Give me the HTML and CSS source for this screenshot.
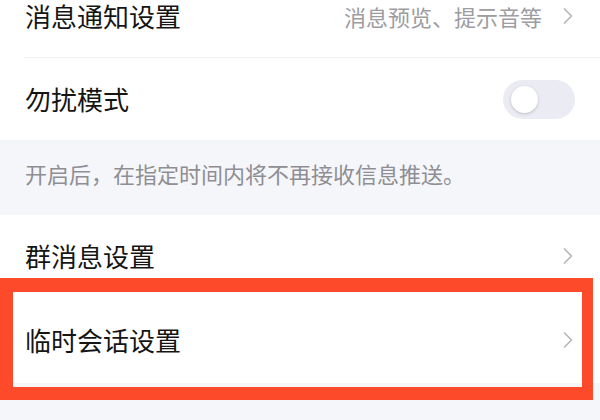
FILE: index.html
```html
<!DOCTYPE html>
<html lang="zh-CN">
<head>
<meta charset="utf-8">
<link rel="stylesheet" href="styles.css">
</head>
<body>
<div class="page">
  <div class="group">
    <div class="row first with-line">
      <span class="label">消息通知设置</span>
      <span class="right">
        <span class="value">消息预览、提示音等</span>
        <svg class="chev" viewBox="0 0 12 18" width="12" height="18"><path d="M2.5 2 L9.5 9 L2.5 16" fill="none" stroke="#b8b8bc" stroke-width="1.7" stroke-linecap="round" stroke-linejoin="round"/></svg>
      </span>
    </div>
    <div class="row dnd">
      <span class="label">勿扰模式</span>
      <span class="toggle"><span class="knob"></span></span>
    </div>
  </div>
  <div class="note">开启后，在指定时间内将不再接收信息推送。</div>
  <div class="group">
    <div class="row group-row">
      <span class="label">群消息设置</span>
      <svg class="chev" viewBox="0 0 12 18" width="12" height="18"><path d="M2.5 2 L9.5 9 L2.5 16" fill="none" stroke="#b8b8bc" stroke-width="1.7" stroke-linecap="round" stroke-linejoin="round"/></svg>
    </div>
    <div class="row temp-row">
      <span class="label">临时会话设置</span>
      <svg class="chev" viewBox="0 0 12 18" width="12" height="18"><path d="M2.5 2 L9.5 9 L2.5 16" fill="none" stroke="#b8b8bc" stroke-width="1.7" stroke-linecap="round" stroke-linejoin="round"/></svg>
      <span class="highlight"></span>
    </div>
  </div>
  <div class="rest"></div>
</div>
</body>
</html>
```

FILE: styles.css
```css
html, body {
  margin: 0;
  padding: 0;
  background: #f5f6fa;
  overflow: hidden;
}
body {
  width: 600px;
  height: 420px;
  font-family: "Noto Sans CJK SC", "Noto Sans", sans-serif;
}
.page {
  margin-top: -26px;
  display: flex;
  flex-direction: column;
}
.group {
  background: #ffffff;
  display: flex;
  flex-direction: column;
}
.row {
  position: relative;
  height: 84px;
  display: flex;
  align-items: center;
  justify-content: space-between;
  padding: 0 26px 0 25px;
  box-sizing: border-box;
}
.first {
  height: 84px;
}
.dnd {
  height: 82px;
}
.group-row {
  height: 82px;
}
.temp-row {
  height: 86px;
}
.with-line::after {
  content: "";
  position: absolute;
  left: 24px;
  right: 0;
  bottom: 0;
  height: 1px;
  background: #f0f0f3;
}
.label {
  font-size: 26px;
  color: #151515;
  line-height: 1;
}
.right {
  display: flex;
  align-items: center;
  gap: 20px;
}
.value {
  font-size: 22px;
  color: #9c9ca1;
  line-height: 1;
}
.chev {
  display: block;
}
.toggle {
  width: 72px;
  height: 39px;
  border-radius: 20px;
  background: #ebecf3;
  display: flex;
  align-items: center;
  padding: 0 8px;
  box-sizing: border-box;
  margin-right: -1px;
}
.knob {
  width: 27px;
  height: 27px;
  border-radius: 50%;
  background: #ffffff;
  box-shadow: 0 1px 3px rgba(0, 0, 0, 0.2);
}
.note {
  height: 75px;
  display: flex;
  align-items: center;
  padding: 0 0 10px 25px;
  box-sizing: border-box;
  font-size: 22px;
  color: #8e8e94;
  line-height: 1;
}
.highlight {
  position: absolute;
  left: 0;
  right: 7px;
  top: -19px;
  bottom: -17px;
  border: 13px solid #fc4a2b;
  border-top-width: 14px;
  border-right-width: 11px;
  pointer-events: none;
}
.rest {
  height: 60px;
}
```
